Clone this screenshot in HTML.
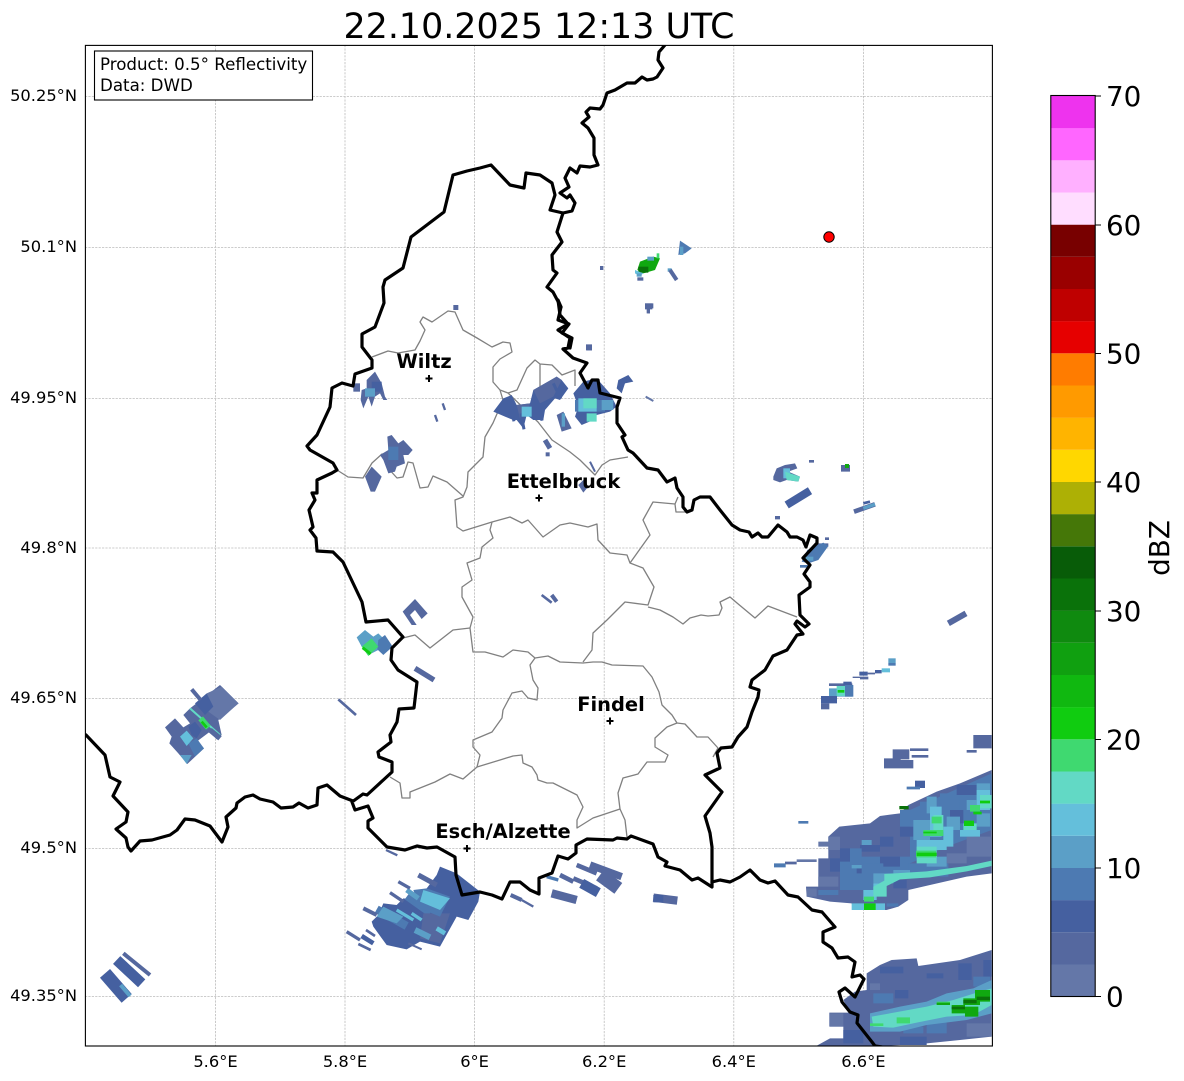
<!DOCTYPE html>
<html><head><meta charset="utf-8"><title>Radar</title>
<style>
html,body{margin:0;padding:0;background:#fff}
svg{display:block}
text{font-family:"DejaVu Sans","Liberation Sans",sans-serif;fill:#000}
.c0{fill:#6477a8}.c1{fill:#55689f}.c2{fill:#4560a0}.c3{fill:#4d7ab2}.c4{fill:#5b9fc7}.c5{fill:#64bfdb}.c6{fill:#62d9c5}.c7{fill:#3fd970}.g1{fill:#10cc10}.g2{fill:#10a810}.g3{fill:#0a720a}
.s0,.s1,.s2,.s3,.s4,.s5,.s6,.s7,.sg{fill:none}
.s0{stroke:#6477a8}.s1{stroke:#55689f}.s2{stroke:#4560a0}.s3{stroke:#4d7ab2}.s4{stroke:#5b9fc7}.s5{stroke:#64bfdb}.s6{stroke:#62d9c5}.s7{stroke:#3fd970}.sg{stroke:#10cc10}
.grid{stroke:#bcbcbc;stroke-width:.8;stroke-dasharray:2.2 1.2;fill:none}
.grey{stroke:#808080;stroke-width:1.3;fill:none;stroke-linejoin:round}
.blk{stroke:#000;stroke-width:3.2;fill:none;stroke-linejoin:round;stroke-linecap:round}
.tl{font-size:16.3px}
.cb{font-size:27.8px}
.city{font-size:19.44px;font-weight:bold;text-anchor:middle}
</style></head><body>
<svg width="1184" height="1081" viewBox="0 0 1184 1081" xmlns="http://www.w3.org/2000/svg">
<rect width="1184" height="1081" fill="#fff"/>
<defs><clipPath id="ax"><rect x="85" y="45" width="907" height="1001"/></clipPath></defs>

<text x="539" y="38" font-size="34.85" text-anchor="middle">22.10.2025 12:13 UTC</text>

<g clip-path="url(#ax)">
<!-- grid -->
<path class="grid" d="M215.5 45V1046M345 45V1046M474.6 45V1046M604.2 45V1046M733.8 45V1046M863.4 45V1046M85 96.5H992M85 247.5H992M85 398.5H992M85 548H992M85 698.5H992M85 848.5H992M85 996.5H992"/>

<!-- grey admin borders -->
<path class="grey" d="M372 357L388 351L398 353L415 350L420 341L425 330L420 322L423 317L432 322L448 311L455 312L463 330L477 338L492 347L503 342L510 343L512 352L500 359L493 367L493 382L500 390L503 400L493 423L485 437L483 457L468 472L467 487L463 497L455 500L457 527L463 531L492 522L510 517L522 523L528 520L543 537L560 525L570 523L588 527L597 524L598 540L610 553L627 555L630 563L643 568L654 587L648 605L625 602L607 620L593 633L592 650L583 662"/>
<path class="grey" d="M630 563L650 535L643 520L653 502L675 504L676 512L687 512M675 504L678 497"/>
<path class="grey" d="M648 607L660 610L673 617L683 624L690 618L701 615L708 616L719 615L722 608L720 602L730 597L737 603L755 618L768 606L797 617"/>
<path class="grey" d="M500 390L508 393L517 390L527 368L535 360L540 364L552 365L562 375L575 370L575 386M540 364L540 388M508 393L538 422L552 440L570 452L580 460L595 475L602 465L610 460L628 457"/>
<path class="grey" d="M337 470L348 477L363 478L372 463L382 454L387 467L397 478L403 477L408 462L413 463L420 488L428 487L433 476L447 482L463 496"/>
<path class="grey" d="M492 522L490 530L493 538L482 547L480 558L467 563L472 580L462 587L462 597L473 617L470 628L473 652L485 652L503 657L513 650L528 652L535 658L548 656L560 662L583 663L593 662L602 662L612 665L643 666L652 677L659 692L662 705L672 715L677 723L685 724L697 737L708 737L718 748L713 757"/>
<path class="grey" d="M470 628L453 630L430 648L415 635L403 638"/>
<path class="grey" d="M535 658L530 665L533 680L538 688L537 700L528 698L522 691L512 693L503 710L502 718L492 732L473 740L473 747L480 755L477 767L463 779L450 774L435 782L410 792L410 798L402 798L400 783L390 777"/>
<path class="grey" d="M477 767L500 760L513 756L522 755L523 763L532 767L537 775L538 780L547 783L553 783L577 795L583 807L577 820L577 828L593 818L620 809L625 820L627 837"/>
<path class="grey" d="M620 809L618 793L623 778L638 774L647 762L665 762L668 755L655 747L655 738L667 727L677 723"/>

<!-- SE upper echo -->
<g transform="translate(760,730) scale(.33333)">
<path class="c1" d="M138 470H175V385H205V320L238 290L330 280L360 258L420 250L445 225L530 185L600 160L695 120V430L620 440L510 465L445 480V510L415 530L380 540H280L275 520L210 515L140 500Z"/>
<path class="c3" d="M450 240L695 130V300L560 350L450 400ZM240 380H450V440H340V480H240Z"/>
<path class="c0" d="M620 320h75v60h-75zM560 370h60v30h-60zM205 320h35v40h-35zM175 440h60v30h-60zM140 475h30v25h-30z"/>
<path class="c2" d="M240 355h30v40h-30zM300 345h60v20h-60zM360 320h40v30h-40zM420 290h40v30h-40zM210 385h30v40h-30zM590 165h60v30h-60zM570 240h40v40h-40zM400 450h40v25h-40zM290 415h40v15h-40zM360 380h60v30h-60z"/>
<path class="c3" d="M270 355h35v60h-35zM240 450h60v30h-60zM305 400h35v50h-35zM340 400h30v30h-30zM420 240h60v50h-60zM480 215h40v40h-40zM540 190h30v60h-30zM600 200h40v40h-40zM650 150h45v30h-45zM175 480h60v15h-60zM380 520h35v10h-35zM445 400h120v40h-120z"/>
<path class="c4" d="M460 270h50v60h-50zM500 200h30v50h-30zM560 260h40v40h-40zM650 250h40v40h-40zM620 210h30v30h-30zM400 420h50v25h-50zM500 380h60v30h-60zM275 405h30v10h-30zM305 330h30v15h-30zM650 160h40v50h-40zM340 430h60v30h-60z"/>
<path class="c5" d="M510 230h35v90h-35zM550 290h30v60h-30zM340 460h35v30h-35zM310 480h40v30h-40zM275 520h100v20h-100zM600 300h60v20h-60zM650 180h40v60h-40zM470 330h90v30h-90z"/>
<path class="c6" d="M373 432L500 424L620 408L695 392V408L620 424L510 442L420 448L380 468V500L340 500V470L373 452ZM520 255h30v50h-30zM470 350h60v50h-60zM610 280h40v20h-40zM660 195h35v40h-35z"/>
<path class="c7" d="M515 260h30v20h-30zM490 300h60v18h-60zM468 362h60v20h-60zM630 225h30v20h-30zM312 500h30v15h-30z"/>
<path class="g1" d="M312 520h35v20h-35zM470 368h60v10h-60zM490 305h40v5h-40zM612 272h30v16h-30zM660 212h30v8h-30zM640 245h25v8h-25z"/>
<path class="g3" d="M418 228h28v10h-28z"/>
<!-- small -->
<path class="c1" d="M398 58h50v30h-50zM372 85h50v30h-50zM420 90h40v25h-40zM450 55h55v8h-55zM455 75h50v8h-50zM640 15h55v40h-55zM620 60h30v8h-30zM75 395h35v8h-35z"/>
<path class="c2" d="M465 152h30v22h-30z"/>
<path class="c3" d="M440 170h40v8h-40zM115 273h30v8h-30zM42 400h35v12h-35z"/>
<path class="c0" d="M110 388h60v8h-60zM175 335h35v15h-35z"/>
<!-- lower echo -->
<path class="c1" d="M320 730L360 705L395 690L470 685L475 708L600 690L695 660V920L600 930L500 940L420 945L340 950H165L210 925H250V890H208V848H270L250 810L285 785L320 780Z"/>
<path class="c2" d="M595 700h40v50h-40zM670 690h25v50h-25zM405 780h40v25h-40zM360 710h70v20h-70zM420 920h80v25h-80zM500 730h50v15h-50zM250 900h60v40h-60z"/>
<path class="c0" d="M620 880h75v40h-75zM330 760h30v20h-30zM210 850h40v40h-40z"/>
<path class="c3" d="M340 790h60v30h-60zM500 870h60v40h-60zM430 890h60v20h-60zM560 800h50v15h-50zM640 740h50v30h-50z"/>
<path class="c4" d="M330 850L420 830L500 815L560 790L640 775L695 750V850L620 870L500 885L420 905H330Z"/>
<path class="c6" d="M335 860L500 830L580 810L660 785L695 775V825L640 855L560 860L470 878L400 893L340 890Z"/>
<path class="c7" d="M410 862h40v18h-40zM330 880h40v8h-40zM530 815h40v10h-40z"/>
<path class="g2" d="M610 805h50v20h-50zM575 825h40v25h-40zM615 830h40v30h-40zM645 780h45v35h-45zM530 818h40v7h-40z"/>
<path class="g3" d="M575 830h40v8h-40zM610 810h40v10h-40zM650 800h40v10h-40z"/>
</g>

<!-- east mid echoes -->
<g transform="translate(760,450) scale(.33333)">
<path class="c1" d="M40 80L50 55L75 45L105 40L112 55L85 65L120 80L115 95L80 90L60 97L40 90Z"/>
<path class="c5" d="M70 55h20v30h-20z"/><path class="c6" d="M75 65L120 80L115 95L80 90Z"/>
<path class="c1" d="M147 30h15v8h-15zM243 45h27v20h-27zM45 198h15v10h-15zM195 262h12v8h-12zM170 280h35v10h-35z"/>
<path class="g2" d="M255 42h12v12h-12z"/>
<path class="s2" stroke-width="24" d="M80 165L150 122"/>
<path class="s1" stroke-width="14" d="M282 185L345 163"/><path class="s4" stroke-width="10" d="M310 175L345 163"/><path class="s2" stroke-width="8" d="M310 160L330 155"/>
<path class="c3" d="M142 300L190 278L205 288L175 330L145 340L125 335Z"/>
<path class="c4" d="M135 320h25v12h-25z"/><path class="c3" d="M120 345h25v8h-25z"/>
<path class="s1" stroke-width="18" d="M565 520L618 490"/>
<path class="c4" d="M385 625h22v14h-22z"/><path class="c3" d="M385 639h22v8h-22z"/>
<path class="c2" d="M298 665h25v12h-25zM345 660h20v10h-20z"/>
<path class="c1" d="M300 680h25v8h-25zM278 680h25v4h-25zM320 668h25v5h-25zM207 700h70v8h-70z"/>
<path class="c5" d="M365 655h25v12h-25z"/>
<path class="c2" d="M250 695h25v10h-25z"/>
<path class="c4" d="M207 715h70v25h-70z"/><path class="c3" d="M255 705h25v35h-25z"/><path class="c6" d="M230 708h25v30h-25z"/>
<path class="g1" d="M233 720h20v8h-20z"/>
<path class="c2" d="M183 738h48v22h-48z"/><path class="c1" d="M183 760h25v18h-25z"/>
</g>

<!-- west echoes -->
<g transform="translate(80,640) scale(.33333)">
<path class="c1" d="M255 262L285 235L310 262L330 250L310 225L330 205L420 135L476 190L415 240L425 285L410 298L390 275L350 305L372 325L322 372L295 340L268 310L275 290Z"/>
<path class="c0" d="M380 160L425 140L475 190L420 240L385 215Z"/>
<path class="c2" d="M325 260L345 245L365 270L350 295L335 285ZM345 190L380 160L400 200L375 225Z"/>
<path class="c3" d="M325 310L350 295L372 325L345 350Z"/>
<path class="c5" d="M300 290L320 272L340 295L320 318Z"/>
<path class="c4" d="M300 345L335 345L320 372Z"/>
<path class="s6" stroke-width="6" d="M330 205L420 285"/>
<path class="s7" stroke-width="18" d="M362 235L385 263"/>
<path class="sg" stroke-width="8" d="M365 245L380 262"/>
<path class="s1" stroke-width="12" d="M335 148L362 180"/>
<path class="s1" stroke-width="16" d="M390 270L420 295"/>
<path class="s1" stroke-width="8" d="M775 178L828 225"/>
<path class="s2" stroke-width="40" d="M75 1000L140 1075"/>
<path class="s2" stroke-width="32" d="M110 960L185 1030"/>
<path class="s1" stroke-width="12" d="M130 940L210 1005"/>
<path class="s4" stroke-width="12" d="M122 1035L150 1068"/>
</g>

<!-- central echoes -->
<g transform="translate(300,300) scale(.33333)">
<path class="c1" d="M460 15h15v15h-15z"/>
<path class="c1" d="M160 250h20v25h-20z"/>
<path class="c1" d="M200 240L225 215L245 250L255 290L262 300L250 300L240 280L225 290L215 320L205 290L190 325L182 300L185 270L200 265Z"/>
<path class="c2" d="M215 245h30v30h-30z"/><path class="c4" d="M195 265h30v25h-30z"/>
<path class="s1" stroke-width="7" d="M428 310L435 330M405 345L412 365"/>
<path class="c1" d="M262 410L275 405L295 430L310 420L338 450L325 465L310 465L315 490L290 500L285 515L265 520L250 480L240 465L265 450ZM195 530L215 500L245 530L225 575L212 575Z"/>
<path class="c3" d="M265 440h30v40h-30z"/>
<path class="c2" d="M580 335L610 295L635 285L650 315L690 310L700 270L770 230L785 240L805 265L780 300L765 295L735 330L730 360L700 360L680 345L670 385L650 360L640 360L615 350Z"/>
<path class="c1" d="M700 270L770 230L785 240L760 290L720 310ZM650 315L690 310L680 345L660 355Z"/>
<path class="s2" stroke-width="9" d="M663 340L672 388M632 320L642 364M716 310L726 362M760 250L782 296"/>
<path class="c5" d="M665 320h30v30h-30z"/>
<path class="c2" d="M820 280L850 245L890 235L930 280L950 320L930 335L890 345L880 360L845 375L825 350L835 320Z"/>
<path class="c3" d="M825 300h90v35h-90z"/>
<path class="c5" d="M835 295h55v40h-55z"/><path class="c6" d="M850 295h40v30h-40zM860 340h30v25h-30z"/><path class="c4" d="M905 300h35v30h-35z"/>
<path class="c1" d="M770 345L790 335L815 385L785 395Z"/><path class="c4" d="M785 340h10v40h-10z"/>
<path class="c2" d="M955 240L985 225L1000 245L975 250L965 280L950 265Z"/>
<path class="s0" stroke-width="6" d="M1037 290L1060 303"/>
<path class="s1" stroke-width="15" d="M735 420L750 445"/>
<path class="c1" d="M737 457h12v12h-12z"/>
<path class="s1" stroke-width="6" d="M870 485L885 515"/>
<path class="c1" d="M835 555L850 540L865 560L850 578Z"/>
<path class="s1" stroke-width="8" d="M725 885L755 908"/><path class="s1" stroke-width="12" d="M755 885L770 905"/>
<path class="c1" d="M308 935L345 897L383 940L365 957L345 930L330 945L350 975L335 975Z"/>
<path class="c1" d="M1035 10h25v15h-25zM1042 25h8v15h-8zM860 135h16v16h-16z"/>
<path class="c4" d="M170 1012L195 990L220 1010L235 1000L260 1025L235 1050L205 1065L185 1040Z"/>
<path class="c3" d="M235 1020L255 1005L278 1040L250 1065L232 1048Z"/>
<path class="c7" d="M185 1040L215 1015L235 1040L205 1068Z"/>
<path class="sg" stroke-width="9" d="M188 1043L212 1062"/>
</g>

<!-- Esch echoes -->
<g transform="translate(340,850) scale(.33333)">
<path class="c2" d="M115 195L130 160L170 165L190 145L230 150L260 115L290 75L300 50L350 70L420 125L415 155L385 210L350 200L300 290L240 275L200 298L140 285L100 230L95 215Z"/>
<path class="s3" stroke-width="25" d="M110 178L200 228"/>
<path class="s3" stroke-width="20" d="M200 140L270 190"/>
<path class="c1" d="M250 190L330 190L300 280L240 265Z"/>
<path class="c3" d="M220 120L260 115L330 140L300 200L240 175Z"/>
<path class="c5" d="M250 120L330 145L300 180L240 155Z"/>
<path class="c4" d="M130 170L190 200L170 220L110 200Z"/>
<path class="s5" stroke-width="10" d="M170 180L220 210M215 190L245 210"/>
<path class="s4" stroke-width="18" d="M225 240L270 262"/>
<path class="s5" stroke-width="14" d="M290 235L315 250"/>
<path class="s4" stroke-width="15" d="M200 120L235 145"/>
<path class="s1" stroke-width="15" d="M235 75L290 105"/>
<path class="s1" stroke-width="10" d="M175 95L210 115M150 128L190 155M20 245L60 270"/>
<path class="s1" stroke-width="12" d="M70 175L110 195"/>
<path class="s2" stroke-width="14" d="M65 258L100 280"/>
<path class="s1" stroke-width="8" d="M78 240L105 258M55 282L92 300"/>
<path class="s1" stroke-width="6" d="M205 280L245 298"/>
<path class="s1" stroke-width="12" d="M512 135L545 150"/><path class="s1" stroke-width="7" d="M545 150L580 170"/>
<path class="s3" stroke-width="10" d="M620 80L655 90"/>
<path class="s1" stroke-width="14" d="M660 75L700 95M700 85L770 115M710 45L770 70"/>
<path class="s1" stroke-width="22" d="M750 45L845 80"/>
<path class="s1" stroke-width="40" d="M780 75L835 115"/>
<path class="s2" stroke-width="30" d="M725 100L775 128"/>
<path class="s1" stroke-width="25" d="M635 130L710 150M940 143L1012 152"/>
<path class="c2" d="M940 135h30v22h-30z"/>
<path class="s1" stroke-width="7" d="M138 0L172 16"/>
</g>
<g transform="translate(300,620) scale(.33333)">
<path class="s1" stroke-width="16" d="M345 145L402 180"/>
</g>

<!-- top echoes -->
<g transform="translate(520,40) scale(.33333)">
<path class="g2" d="M360 665L400 650L420 655L405 690L370 700L352 690Z"/>
<path class="g3" d="M355 680h30v18h-30z"/>
<path class="c5" d="M345 690L370 700L360 708L345 700Z"/><path class="c4" d="M350 700h15v10h-15z"/><path class="c1" d="M352 712h18v10h-18z"/>
<path class="c7" d="M410 640h8v15h-8z"/><path class="c4" d="M382 650h20v12h-20z"/>
<path class="c3" d="M480 602L515 625L495 640L475 645Z"/><path class="c4" d="M480 620h10v25h-10z"/>
<path class="c1" d="M240 678h10v12h-10zM375 790h22v18h-22zM380 805h10v15h-10zM198 913h18v18h-18z"/>
<path class="c4" d="M443 685h12v10h-12z"/>
<path class="s1" stroke-width="12" d="M450 690L470 720"/>
</g>

<!-- black borders -->
<path class="blk" d="M665 45L659 52L658 60L663 68L657 77L653 79L647 80L642 77L635 83L627 83L615 90L607 93L603 105L600 109L590 108L586 112L589 117L582 123L588 128L594 138L594 155L598 165L590 167L580 166L577 173L570 168L565 178L569 187L560 193L567 198L570 195L575 203L572 211L563 213L550 210L555 195L552 183L540 175L526 173L524 188L510 185L491 165L480 168L467 171L453 175L444 212L411 237L403 268L385 280L383 287L384 303L375 327L362 334L362 347L372 360L372 368L355 374L353 386L342 383L332 388L330 407L317 435L307 446L310 450L333 463L337 470L332 473L317 480L317 493L312 493L315 500L309 510L313 527L310 530L316 538L317 551L333 552L343 562L362 602L366 622L388 620L403 637L392 648L391 660L398 670L417 682L414 708L399 709L397 722L390 735L391 742L378 752L379 757L392 762L392 772L367 795L363 794L352 802L355 810L368 806L373 818L368 821L368 828L387 847L405 850L417 846L427 848L437 847L455 857L456 875L462 895L480 892L492 895L502 899L510 882L520 882L530 890L539 894L539 878L552 873L558 856L568 859L576 853L576 845L587 839L613 840L617 838L627 839L631 836L653 844L658 857L667 862L665 866L680 870L692 880L698 878L712 887L712 847L710 833L705 816L722 792L705 775L720 768L717 753L721 748L732 747L738 737L747 727L752 712L758 697L759 690L750 687L752 680L765 670L773 656L787 650L797 635L803 634L795 624L797 621L805 627L809 624L800 615L799 595L810 587L810 582L804 574L810 565L803 558L817 543L817 538L810 535L806 547L803 540L797 537L790 537L787 532L778 525L768 537L762 537L758 533L752 537L749 532L740 530L732 525L720 510L710 497L700 497L694 500L692 510L687 512L683 507L683 497L677 488L675 478L667 482L658 470L647 468L633 453L628 450L622 437L625 435L617 423L617 407L620 398L600 393L598 380L592 380L588 388L580 373L587 363L573 358L563 349L568 348L570 338L558 330L568 324L560 315L558 300L561 307"/>
<path class="blk" d="M563 213L557 232L562 242L552 255L553 270L557 273L547 287L553 292L561 307L558 320L569 324L562 333L572 338L570 348"/>
<path class="blk" d="M86 735L105 755L110 777L120 782L113 796L128 812L126 822L116 829L126 838L128 847L131 851L140 841L152 840L170 835L177 830L185 819L195 820L210 826L222 842L228 827L226 817L236 808L237 803L245 797L253 795L260 799L273 802L281 808L293 807L299 803L308 808L317 805L318 788L327 785L340 796L353 801"/>
<path class="blk" d="M712 882L720 880L730 882L740 877L750 870L760 880L768 883L775 881L788 895L798 897L812 910L822 912L835 927L823 932L823 942L832 948L838 958L848 957L855 962L852 977L860 975L864 979L855 997L845 988L839 992L842 1002L850 1012L858 1015L857 1023L872 1042L875 1046L882 1047"/>
</g>

<!-- axes frame -->
<rect x="85.4" y="45.4" width="907" height="1000.6" fill="none" stroke="#000" stroke-width="1.1"/>

<!-- info box -->
<rect x="94.5" y="51" width="218" height="49" fill="#fff" stroke="#000" stroke-width="1.1"/>
<text x="100" y="70" font-size="16.67">Product: 0.5° Reflectivity</text>
<text x="100" y="91" font-size="16.67">Data: DWD</text>

<!-- cities -->
<text class="city" x="424" y="368">Wiltz</text>
<text class="city" x="563.5" y="488">Ettelbruck</text>
<text class="city" x="611" y="711">Findel</text>
<text class="city" x="503" y="838">Esch/Alzette</text>
<path stroke="#000" stroke-width="2" fill="none" d="M425.5 378.5h7M429 375v7M535.5 498h7M539 494.5v7M606.5 721h7M610 717.5v7M463.5 848.5h7M467 845v7"/>

<!-- red dot -->
<circle cx="829" cy="237" r="5.2" fill="#f00" stroke="#000" stroke-width="1"/>

<!-- tick labels -->
<g class="tl" text-anchor="middle">
<text x="215.5" y="1067">5.6°E</text><text x="345" y="1067">5.8°E</text><text x="474.6" y="1067">6°E</text><text x="604.2" y="1067">6.2°E</text><text x="733.8" y="1067">6.4°E</text><text x="863.4" y="1067">6.6°E</text>
</g>
<g class="tl" text-anchor="end">
<text x="77" y="101">50.25°N</text><text x="77" y="252">50.1°N</text><text x="77" y="403">49.95°N</text><text x="77" y="553">49.8°N</text><text x="77" y="703">49.65°N</text><text x="77" y="853">49.5°N</text><text x="77" y="1001">49.35°N</text>
</g>

<!-- colorbar -->
<g>
<rect x="1051" y="964.5" width="44" height="32" fill="#6477a8"/>
<rect x="1051" y="932.3" width="44" height="32.2" fill="#55689f"/>
<rect x="1051" y="900.1" width="44" height="32.2" fill="#4560a0"/>
<rect x="1051" y="868" width="44" height="32.2" fill="#4d7ab2"/>
<rect x="1051" y="835.8" width="44" height="32.2" fill="#5b9fc7"/>
<rect x="1051" y="803.6" width="44" height="32.2" fill="#64bfdb"/>
<rect x="1051" y="771.5" width="44" height="32.2" fill="#62d9c5"/>
<rect x="1051" y="739.3" width="44" height="32.2" fill="#3fd970"/>
<rect x="1051" y="707.1" width="44" height="32.2" fill="#10cc10"/>
<rect x="1051" y="675" width="44" height="32.2" fill="#10b810"/>
<rect x="1051" y="642.8" width="44" height="32.2" fill="#10a010"/>
<rect x="1051" y="610.6" width="44" height="32.2" fill="#0f8a0f"/>
<rect x="1051" y="578.5" width="44" height="32.2" fill="#0a720a"/>
<rect x="1051" y="546.3" width="44" height="32.2" fill="#085c08"/>
<rect x="1051" y="514.1" width="44" height="32.2" fill="#457708"/>
<rect x="1051" y="482" width="44" height="32.2" fill="#adb005"/>
<rect x="1051" y="449.8" width="44" height="32.2" fill="#ffd700"/>
<rect x="1051" y="417.6" width="44" height="32.2" fill="#ffb400"/>
<rect x="1051" y="385.5" width="44" height="32.2" fill="#ff9a00"/>
<rect x="1051" y="353.3" width="44" height="32.2" fill="#ff7c00"/>
<rect x="1051" y="321.1" width="44" height="32.2" fill="#e60000"/>
<rect x="1051" y="289" width="44" height="32.2" fill="#bf0000"/>
<rect x="1051" y="256.8" width="44" height="32.2" fill="#9a0000"/>
<rect x="1051" y="224.6" width="44" height="32.2" fill="#780000"/>
<rect x="1051" y="192.5" width="44" height="32.2" fill="#ffddff"/>
<rect x="1051" y="160.3" width="44" height="32.2" fill="#ffb0ff"/>
<rect x="1051" y="128.1" width="44" height="32.2" fill="#ff66ff"/>
<rect x="1051" y="95.5" width="44" height="32.7" fill="#ee33ee"/>
<rect x="1050.8" y="95.5" width="44.4" height="901" fill="none" stroke="#000" stroke-width="1.1"/>
<path stroke="#000" stroke-width="1.1" fill="none" d="M1095 96H1101M1095 225H1101M1095 353.5H1101M1095 482H1101M1095 611H1101M1095 739.5H1101M1095 868H1101M1095 996.5H1101"/>
</g>
<g class="cb">
<text x="1106" y="106">70</text><text x="1106" y="235">60</text><text x="1106" y="363.5">50</text><text x="1106" y="492">40</text><text x="1106" y="621">30</text><text x="1106" y="749.5">20</text><text x="1106" y="878">10</text><text x="1106" y="1006.5">0</text>
</g>
<text class="cb" transform="translate(1169,548) rotate(-90)" text-anchor="middle">dBZ</text>
</svg>
</body></html>
